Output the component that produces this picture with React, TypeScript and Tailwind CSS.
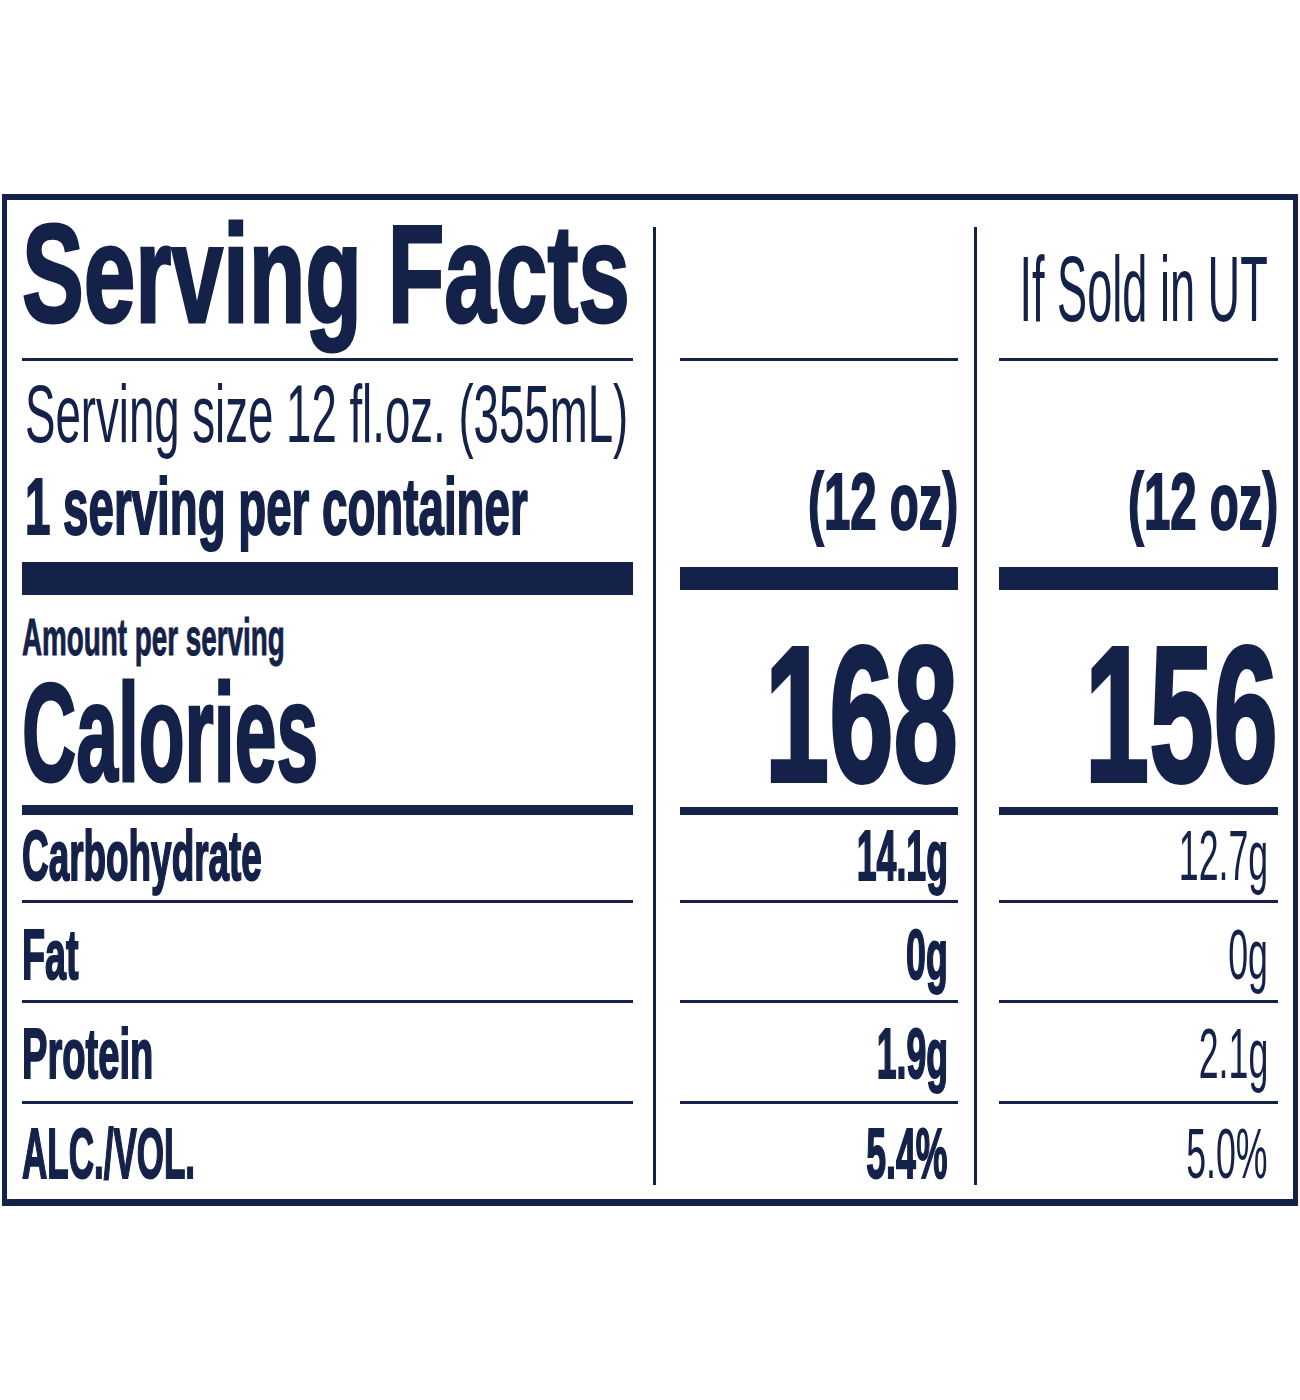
import React from "react";

function L({ cls, children }: { cls: string; children: React.ReactNode }) {
  return (
    <div className="flex">
      <span className={"shrink-0 whitespace-nowrap leading-none origin-left " + cls}>{children}</span>
    </div>
  );
}

function R({ cls, children }: { cls: string; children: React.ReactNode }) {
  return (
    <div className="flex justify-end">
      <span className={"shrink-0 whitespace-nowrap leading-none origin-right " + cls}>{children}</span>
    </div>
  );
}

const BOLD = "font-bold [-webkit-text-stroke:2px_#142149]";

function ValueRows({ vals, bold }: { vals: string[]; bold: boolean }) {
  const w = bold ? BOLD : "font-normal";
  return (
    <>
      <div className="h-[85px] pt-[6px] pr-[10px]">
        <R cls={"text-[70px] scale-x-[0.51] " + w}>{vals[0]}</R>
      </div>
      <div className="h-[3px] bg-[#142149]" />
      <div className="h-[97px] pt-[17px] pr-[10px]">
        <R cls={"text-[70px] scale-x-[0.51] " + w}>{vals[1]}</R>
      </div>
      <div className="h-[3px] bg-[#142149]" />
      <div className="h-[98px] pt-[16px] pr-[10px]">
        <R cls={"text-[70px] scale-x-[0.51] " + w}>{vals[2]}</R>
      </div>
      <div className="h-[3px] bg-[#142149]" />
      <div className="flex-1 pt-[15px] pr-[10px]">
        <R cls={"text-[70px] scale-x-[0.51] " + w}>{vals[3]}</R>
      </div>
    </>
  );
}

export default function App() {
  return (
    <div className="w-[1300px] h-[1400px] bg-white pt-[194px] pl-[2px] text-[#142149] font-['Liberation_Sans',Arial,sans-serif]">
      <div className="w-[1296px] h-[1012px] border-x-[5px] border-t-[6px] border-b-[7px] border-[#142149] flex pl-[15px]">
        {/* Left column */}
        <div className="w-[611px] flex flex-col">
          <div className="h-[158px] pt-[4px]">
            <L cls="text-[140px] font-bold scale-x-[0.662] [-webkit-text-stroke:3px_#142149]">Serving Facts</L>
          </div>
          <div className="h-[3px] bg-[#142149]" />
          <div className="h-[201px] pt-[13px] pl-[3px]">
            <L cls="text-[81px] font-normal scale-x-[0.563]">Serving size 12 fl.oz. (355mL)</L>
            <div className="mt-[12px]">
              <L cls={"text-[80px] scale-x-[0.571] " + BOLD}>1 serving per container</L>
            </div>
          </div>
          <div className="h-[33px] bg-[#142149]" />
          <div className="h-[210px] pt-[16px]">
            <div className="h-[50px]">
              <L cls="text-[52px] font-bold scale-x-[0.535] [-webkit-text-stroke:1px_#142149]">Amount per serving</L>
            </div>
            <div className="mt-[2px]">
              <L cls="text-[140px] font-bold scale-x-[0.536] [-webkit-text-stroke:3px_#142149]">Calories</L>
            </div>
          </div>
          <div className="h-[10px] bg-[#142149]" />
          <div className="h-[85px] pt-[6px]">
            <L cls={"text-[70px] scale-x-[0.527] " + BOLD}>Carbohydrate</L>
          </div>
          <div className="h-[3px] bg-[#142149]" />
          <div className="h-[97px] pt-[17px]">
            <L cls={"text-[70px] scale-x-[0.54] " + BOLD}>Fat</L>
          </div>
          <div className="h-[3px] bg-[#142149]" />
          <div className="h-[98px] pt-[16px]">
            <L cls={"text-[70px] scale-x-[0.545] " + BOLD}>Protein</L>
          </div>
          <div className="h-[3px] bg-[#142149]" />
          <div className="flex-1 pt-[15px]">
            <L cls={"text-[70px] scale-x-[0.5] " + BOLD}>ALC./VOL.</L>
          </div>
        </div>

        <div className="w-[20px]" />
        <div className="w-[3px] mt-[27px] mb-[14px] bg-[#142149]" />
        <div className="w-[24px]" />

        {/* Middle column */}
        <div className="w-[278px] flex flex-col">
          <div className="h-[158px]" />
          <div className="h-[3px] bg-[#142149]" />
          <div className="h-[206px] pt-[101px]">
            <R cls={"text-[80px] scale-x-[0.593] " + BOLD}>(12 oz)</R>
          </div>
          <div className="h-[23px] bg-[#142149]" />
          <div className="h-[217px] pt-[28px]">
            <R cls="text-[193px] font-bold scale-x-[0.6] [-webkit-text-stroke:4px_#142149]">168</R>
          </div>
          <div className="h-[8px] bg-[#142149]" />
          <ValueRows vals={["14.1g", "0g", "1.9g", "5.4%"]} bold={true} />
        </div>

        <div className="w-[16px]" />
        <div className="w-[3px] mt-[27px] mb-[14px] bg-[#142149]" />
        <div className="w-[22px]" />

        {/* Right column */}
        <div className="w-[279px] flex flex-col">
          <div className="h-[158px] pt-[43px] pr-[10px]">
            <R cls="text-[93px] font-normal scale-x-[0.485]">If Sold in UT</R>
          </div>
          <div className="h-[3px] bg-[#142149]" />
          <div className="h-[206px] pt-[101px]">
            <R cls={"text-[80px] scale-x-[0.593] " + BOLD}>(12 oz)</R>
          </div>
          <div className="h-[23px] bg-[#142149]" />
          <div className="h-[217px] pt-[28px]">
            <R cls="text-[193px] font-bold scale-x-[0.6] [-webkit-text-stroke:4px_#142149]">156</R>
          </div>
          <div className="h-[8px] bg-[#142149]" />
          <ValueRows vals={["12.7g", "0g", "2.1g", "5.0%"]} bold={false} />
        </div>
      </div>
    </div>
  );
}
